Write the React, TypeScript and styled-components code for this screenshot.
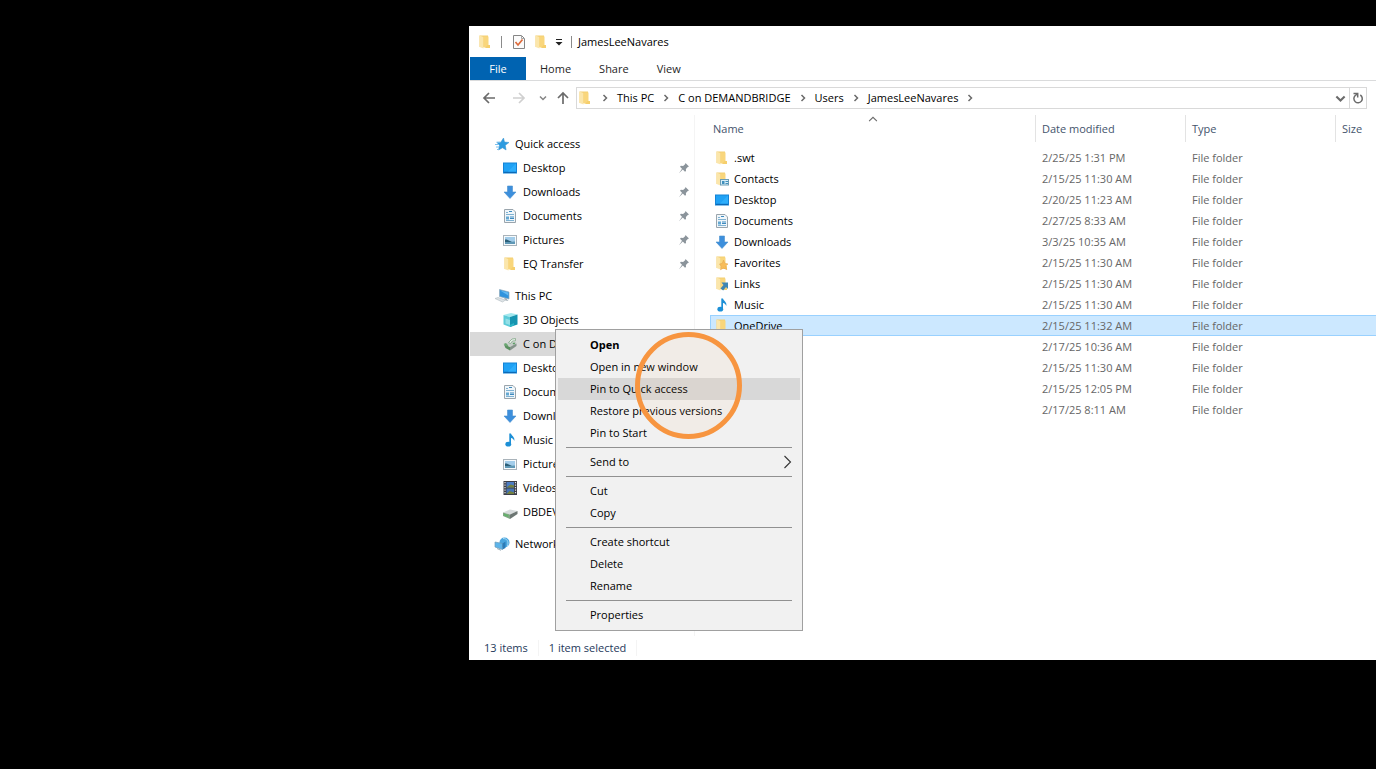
import React from "react";
import styled, { createGlobalStyle, css } from "styled-components";

const GlobalStyle = createGlobalStyle`
  * { box-sizing: border-box; }
  html, body { margin: 0; background: #000; }
  body, button {
    font-family: "Open Sans", "Segoe UI", sans-serif;
    font-size: 11px;
    line-height: 16px;
    color: #000;
  }
  button { margin: 0; padding: 0; border: 0; background: transparent; }
  a { color: inherit; text-decoration: none; }
  svg { display: block; flex: none; }
`;

/* ---------- icons ---------- */

type IconName =
  | "folder" | "desktop" | "download" | "document" | "picture" | "music" | "video"
  | "star" | "pc" | "cube" | "netdrive" | "drive" | "network"
  | "contacts" | "favorites" | "links";

const FolderShape = () => (
  <>
    <path d="M2.500 1.500H11V13H2.500z" fill="#f3cf72" />
    <path d="M2.500 1.500L6.500 3v11.500l-4-1.500z" fill="#fbe6ab" />
    <path d="M6.500 2.500h5v11h-5z" fill="#f9d67c" />
    <path d="M10.500 11H13v3H8z" fill="#f6cf6d" />
  </>
);

const drawings: Record<IconName, React.ReactNode> = {
  folder: <FolderShape />,
  contacts: (
    <>
      <FolderShape />
      <rect x="6.500" y="8.500" width="8" height="5.500" fill="#d6edf7" stroke="#6c9db5" />
      <path d="M8 10h2.500v3H8z" fill="#3f8fbd" />
      <path d="M11.500 10.500h2.500M11.500 12.500h2.500" stroke="#3f8fbd" />
    </>
  ),
  favorites: (
    <>
      <FolderShape />
      <path d="M9.500 5l1.200 3.200 3.300.8-2.500 2.200 1.300 3.500-3.200-1.700-3.100 1.700.8-3.400L5.500 9l2.800-.6z" fill="#f8bd5a" stroke="#e5a850" strokeWidth=".6" />
    </>
  ),
  links: (
    <>
      <FolderShape />
      <path d="M7.500 6.500H14V13l-2-2-2.800 3.500-2.700-2L9.500 9z" fill="#3f86b4" />
    </>
  ),
  desktop: (
    <>
      <rect x="1" y="2.500" width="14" height="11" fill="#1583d6" />
      <path d="M2 3.500h12v8H2z" fill="#20a2f5" />
      <path d="M14 3.500v8H6z" fill="#2eaefb" />
      <path d="M2 12.500h12" stroke="#0d69b5" />
    </>
  ),
  download: <path d="M5.500 2h5v6H14l-6 6.500L2 8h3.500z" fill="#3d8fdc" stroke="#4a90cf" strokeWidth=".6" />,
  document: (
    <>
      <path d="M2.500 1.500h8.500l2.500 2.500v10.500h-11z" fill="#f0f6fa" stroke="#9aa5ad" />
      <path d="M4 4.500h2M4 6.500h8M4 12.500h8" stroke="#7fb2d2" />
      <path d="M7 3.500h3M8 9h4M8 10.500h4" stroke="#3d8abf" />
      <path d="M4 8.500h3v3H4z" fill="#64a8d2" />
    </>
  ),
  picture: (
    <>
      <rect x="1.500" y="3.500" width="13" height="10" fill="#f6fafc" stroke="#a9b3ba" />
      <path d="M3 5h10v7H3z" fill="#a3cdea" />
      <path d="M3 9.500c3-.5 5 .5 10 0V12H3z" fill="#5f98b6" />
      <path d="M3 7.500c2-.5 4 1 7 2.500H3z" fill="#2b5f78" />
    </>
  ),
  music: (
    <>
      <ellipse cx="6.300" cy="12.200" rx="2.900" ry="2.400" fill="#1c8fd6" />
      <path d="M7.300 1.500H9c.3 2.500 4.200 3.200 3.300 7.500-.7-2-1.600-2.700-3.300-3.100v6.500H7.300z" fill="#1c8fd6" />
    </>
  ),
  video: (
    <>
      <path d="M1.500 1h13.500v14H1.500z" fill="#3d3f48" />
      <path d="M4.500 2h7.500v5.500H4.500z" fill="#4c7cc2" />
      <path d="M4.500 8.500h7.500V14H4.500z" fill="#4573b4" />
      <path d="M4.500 7.500l4-3 3.500 1v2zM4.500 14l3-3 4.500 1.500V14z" fill="#74813e" />
      <path d="M3 2v12.500M13.500 2v12.500" stroke="#e4e6ea" strokeWidth="1.200" strokeDasharray="1.300 1.200" />
    </>
  ),
  star: (
    <>
      <path d="M9.500 2l1 4 4.500.5-3.700 2.800.8 4.700-3.600-2.200L4.500 14l1-4.500-2.500-3 3.800-.3z" fill="#2d9be0" stroke="#3590cc" strokeWidth=".5" />
      <path d="M2.500 6.200H6M1 8.500h4M2 11h3M3 13.500h2" stroke="#7cc0ec" />
    </>
  ),
  pc: (
    <>
      <path d="M5.500 1.500l9.500 2.500v7L5.500 8.500z" fill="#2f93dd" stroke="#8fa9ba" strokeWidth=".7" />
      <path d="M6.200 2.500l8 2v3z" fill="#63b9f2" />
      <path d="M10 9.700l2 .6 2.500 2.700-3-.5z" fill="#a5b1b9" />
      <path d="M1 10.500l3-1 7.500 2.500-3 2z" fill="#dde3e6" stroke="#b0bac0" strokeWidth=".6" />
    </>
  ),
  cube: (
    <>
      <path d="M1.500 3L9 1l6.500 1.500-7.500 2.500z" fill="#a2e8ee" />
      <path d="M1.500 3L8 5v10l-6.500-2.500z" fill="#5ccbd8" />
      <path d="M8 5l7.500-2.500v10L8 15z" fill="#1594b0" />
      <path d="M3.500 6.500L8 8v5l-4.500-1.500z" fill="#92dfe7" />
      <path d="M8 13l4-2v2.500L8 15z" fill="#2db4c6" />
    </>
  ),
  netdrive: (
    <>
      <path d="M5 7l5-1.500 4.500 2L8 11z" fill="#c5ccc8" />
      <path d="M2 8.500L8 11v3.500L3.500 12z" fill="#5a8f60" />
      <path d="M8 11l6.500-3.500V10L8 14.500z" fill="#84928a" />
      <path d="M6.500 6.500L10 3l3.500-.5v2.300l-3 .2-2 2.500z" fill="#e9f0ea" stroke="#82a888" strokeWidth=".8" />
      <path d="M1.500 8l2.500-1 2.500 2.500-1.500 1z" fill="#6aa872" />
      <path d="M10.500 7l3-.5-1.500 2.200z" fill="#4f9a58" />
    </>
  ),
  drive: (
    <>
      <path d="M1 8.500l7-3 7.500 1.500L8 10.500z" fill="#d8dcdd" />
      <path d="M1 8.500l7 2v4.500l-7-3z" fill="#7fa582" />
      <path d="M8 10.500L15.500 7v3L8 15z" fill="#6c7673" />
      <path d="M2 10.500l4 1.500" stroke="#5fb569" strokeWidth="1.500" />
    </>
  ),
  network: (
    <>
      <circle cx="10.500" cy="6.500" r="5" fill="#4ba6de" />
      <path d="M9 2.500c4 0 6 3 4.500 7.500" fill="none" stroke="#a8dbf5" />
      <path d="M1 6l7.500 1.500v6L1 11z" fill="#5cb4ea" stroke="#6d9bb8" strokeWidth=".7" />
      <path d="M8.500 7.500l3-2V12l-3 1.500z" fill="#2c7cb8" />
      <path d="M3 12.500l4 1.800" stroke="#9badb8" />
    </>
  ),
};

const Icon = ({ name }: { name: IconName }) => (
  <svg width="16" height="16" viewBox="0 0 16 16" aria-hidden="true">{drawings[name]}</svg>
);

const PinIcon = () => (
  <svg width="12" height="12" viewBox="0 0 12 12" aria-hidden="true">
    <path d="M7.500 1L11 4.500l-1.200.4-1.900 2 .1 2.100-1 .8-2.200-2.200L1 11.200l3-4.400L2 4.700l.9-.9 2.200.2 2-1.800z" fill="#8b949b" />
  </svg>
);

const Chevron = ({ dir, color = "#6b6b6b", size = 8, weight = 1.5 }: { dir: "right" | "down" | "up"; color?: string; size?: number; weight?: number }) => {
  const d = { right: "M2.500 1l3 3-3 3", down: "M1 2.500l3 3 3-3", up: "M0.500 5.500L4 2l3.500 3.500" }[dir];
  return (
    <svg width={size} height={size} viewBox="0 0 8 8" aria-hidden="true">
      <path d={d} fill="none" stroke={color} strokeWidth={weight} />
    </svg>
  );
};

const ArrowIcon = ({ dir, color }: { dir: "left" | "right" | "up"; color: string }) => {
  const d = {
    left: "M13 7H2M7 2L2 7l5 5",
    right: "M1 7h11M7 2l5 5-5 5",
    up: "M7 13V2M2 7l5-5 5 5",
  }[dir];
  return (
    <svg width="14" height="14" viewBox="0 0 14 14" aria-hidden="true">
      <path d={d} fill="none" stroke={color} strokeWidth="1.700" />
    </svg>
  );
};

/* ---------- window frame ---------- */

const Desktop = styled.div`
  min-height: 100vh;
  padding: 26px 0 0 469px;
  background: #000;
`;

const Window = styled.div`
  position: relative;
  padding-left: 1px;
  background: #fff;
`;

const TitleBar = styled.header`
  display: flex;
  align-items: center;
  height: 31px;
  padding-left: 4px;
`;

const ToolButton = styled.button<{ $narrow?: boolean }>`
  display: flex;
  align-items: center;
  justify-content: center;
  width: ${(p) => (p.$narrow ? 14 : 22)}px;
  height: 22px;
`;

const ToolDivider = styled.span`
  width: 1px;
  height: 12px;
  margin: 0 6px 0 5px;
  background: #8a8a8a;
`;

const Title = styled.h1`
  margin: 0;
  font-size: 11px;
  font-weight: 400;
`;

const Tabs = styled.nav`
  display: flex;
  height: 24px;
  border-bottom: 1px solid #dadbdc;
`;

const Tab = styled.button<{ $primary?: boolean }>`
  padding: 0 14px;
  color: #262626;
  ${(p) => p.$primary && css`
    width: 56px;
    background: #0063b1;
    color: #fff;
  `}
`;

const AddressRow = styled.div`
  display: flex;
  align-items: center;
  padding: 6px 9px 6px 4px;
`;

const NavButton = styled.button<{ $width: number }>`
  display: flex;
  align-items: center;
  justify-content: center;
  width: ${(p) => p.$width}px;
  height: 22px;
`;

const AddressBox = styled.div`
  display: flex;
  flex: 1;
  height: 22px;
  margin-left: 2px;
  border: 1px solid #d9d9d9;
`;

const Crumbs = styled.div`
  display: flex;
  flex: 1;
  align-items: center;
  white-space: nowrap;
`;

const CrumbGap = styled.span`
  display: flex;
  justify-content: center;
  width: 24px;
`;

const BoxButton = styled.button<{ $divided?: boolean }>`
  display: flex;
  align-items: center;
  justify-content: center;
  width: 17px;
  border-left: ${(p) => (p.$divided ? "1px solid #d9d9d9" : "0")};
`;

/* ---------- panes ---------- */

const Panes = styled.div`
  display: flex;
`;

const Sidebar = styled.nav`
  display: flex;
  flex: none;
  flex-direction: column;
  gap: 8px;
  width: 225px;
  padding: 17px 0 80px;
  border-right: 1px solid #f4f4f4;
`;

const Tree = styled.ul`
  margin: 0;
  padding: 0;
  list-style: none;
`;

const TreeLink = styled.a<{ $root?: boolean; $active?: boolean }>`
  display: flex;
  align-items: center;
  gap: 5px;
  height: 24px;
  padding: 0 4px 0 ${(p) => (p.$root ? 24 : 32)}px;
  background: ${(p) => (p.$active ? "#d9d9d9" : "transparent")};
  white-space: nowrap;
`;

const TreeLabel = styled.span`
  flex: 1;
`;

const ListPane = styled.main`
  flex: 1;
  min-width: 0;
  padding-left: 15px;
`;

const FileTable = styled.table`
  width: 100%;
  table-layout: fixed;
  border-collapse: separate;
  border-spacing: 0;
  white-space: nowrap;
`;

const Col = styled.col<{ $width?: number }>`
  width: ${(p) => (p.$width ? `${p.$width}px` : "auto")};
`;

const HeadCell = styled.th`
  position: relative;
  height: 32px;
  padding: 0;
  vertical-align: top;
  text-align: left;
  font-weight: 400;
`;

const HeadLabel = styled.div<{ $first?: boolean }>`
  height: 27px;
  padding-left: ${(p) => (p.$first ? 3 : 6)}px;
  border-left: ${(p) => (p.$first ? "0" : "1px solid #e3e3e3")};
  line-height: 27px;
  color: #44546c;
`;

const SortMark = styled.span`
  position: absolute;
  top: 0;
  left: 50%;
  transform: translateX(-50%);
`;

const Row = styled.tr<{ $selected?: boolean }>`
  td {
    height: 21px;
    padding: 0 0 0 7px;
    color: #666;
  }
  td:first-child {
    padding-left: 4px;
    color: #000;
  }
  ${(p) => p.$selected && css`
    td {
      background: #cce8ff;
      box-shadow: inset 0 1px #99d1ff, inset 0 -1px #99d1ff;
    }
    td:first-child {
      box-shadow: inset 1px 1px #99d1ff, inset 0 -1px #99d1ff;
    }
  `}
`;

const NameCell = styled.div`
  display: flex;
  align-items: center;
  gap: 4px;
`;

const StatusBar = styled.footer`
  display: flex;
  align-items: center;
  height: 24px;
  padding-left: 14px;
  color: #1e395b;
`;

const StatusItem = styled.span`
  margin-right: 10px;
  padding-right: 10px;
  border-right: 1px solid #f4f4f4;
`;

/* ---------- context menu ---------- */

const Menu = styled.div`
  position: absolute;
  top: 303px;
  left: 86px;
  width: 248px;
  padding: 4px 2px;
  border: 1px solid #a0a0a0;
  background: #f1f1f1;
`;

const MenuItem = styled.button<{ $bold?: boolean; $hover?: boolean }>`
  display: flex;
  align-items: center;
  justify-content: space-between;
  width: 100%;
  height: 22px;
  padding: 0 8px 0 32px;
  background: ${(p) => (p.$hover ? "#d8d8d8" : "transparent")};
  font-weight: ${(p) => (p.$bold ? 700 : 400)};
`;

const MenuLine = styled.hr`
  height: 1px;
  margin: 3px 8px;
  border: 0;
  background: #919191;
`;

const ClickRing = styled.div`
  position: absolute;
  top: 306px;
  left: 166px;
  width: 107px;
  height: 107px;
  border: 5px solid #f79540;
  border-radius: 50%;
  background: rgba(247, 149, 64, 0.05);
  pointer-events: none;
`;

/* ---------- data ---------- */

type TreeItem = { label: string; icon: IconName; pinned?: boolean; active?: boolean };

const trees: { root: TreeItem; items: TreeItem[] }[] = [
  {
    root: { label: "Quick access", icon: "star" },
    items: [
      { label: "Desktop", icon: "desktop", pinned: true },
      { label: "Downloads", icon: "download", pinned: true },
      { label: "Documents", icon: "document", pinned: true },
      { label: "Pictures", icon: "picture", pinned: true },
      { label: "EQ Transfer", icon: "folder", pinned: true },
    ],
  },
  {
    root: { label: "This PC", icon: "pc" },
    items: [
      { label: "3D Objects", icon: "cube" },
      { label: "C on DEMANDBRIDGE", icon: "netdrive", active: true },
      { label: "Desktop", icon: "desktop" },
      { label: "Documents", icon: "document" },
      { label: "Downloads", icon: "download" },
      { label: "Music", icon: "music" },
      { label: "Pictures", icon: "picture" },
      { label: "Videos", icon: "video" },
      { label: "DBDEV", icon: "drive" },
    ],
  },
  { root: { label: "Network", icon: "network" }, items: [] },
];

const files: { name: string; icon: IconName; date: string; selected?: boolean }[] = [
  { name: ".swt", icon: "folder", date: "2/25/25 1:31 PM" },
  { name: "Contacts", icon: "contacts", date: "2/15/25 11:30 AM" },
  { name: "Desktop", icon: "desktop", date: "2/20/25 11:23 AM" },
  { name: "Documents", icon: "document", date: "2/27/25 8:33 AM" },
  { name: "Downloads", icon: "download", date: "3/3/25 10:35 AM" },
  { name: "Favorites", icon: "favorites", date: "2/15/25 11:30 AM" },
  { name: "Links", icon: "links", date: "2/15/25 11:30 AM" },
  { name: "Music", icon: "music", date: "2/15/25 11:30 AM" },
  { name: "OneDrive", icon: "folder", date: "2/15/25 11:32 AM", selected: true },
  { name: "Pictures", icon: "picture", date: "2/17/25 10:36 AM" },
  { name: "Saved Games", icon: "folder", date: "2/15/25 11:30 AM" },
  { name: "Searches", icon: "folder", date: "2/15/25 12:05 PM" },
  { name: "Videos", icon: "video", date: "2/17/25 8:11 AM" },
];

const menuGroups = [
  ["Open", "Open in new window", "Pin to Quick access", "Restore previous versions", "Pin to Start"],
  ["Send to"],
  ["Cut", "Copy"],
  ["Create shortcut", "Delete", "Rename"],
  ["Properties"],
];

const crumbs = ["This PC", "C on DEMANDBRIDGE", "Users", "JamesLeeNavares"];

const TreeRow = ({ item, root }: { item: TreeItem; root?: boolean }) => (
  <TreeLink href="#" $root={root} $active={item.active}>
    <Icon name={item.icon} />
    <TreeLabel>{item.label}</TreeLabel>
    {item.pinned && <PinIcon />}
  </TreeLink>
);

export default function App() {
  return (
    <>
      <GlobalStyle />
      <Desktop>
        <Window>
          <TitleBar>
            <ToolButton aria-label="Window"><Icon name="folder" /></ToolButton>
            <ToolDivider />
            <ToolButton aria-label="Properties">
              <svg width="14" height="16" viewBox="0 0 14 16" aria-hidden="true">
                <path d="M1.500 1.500h8l3 3v10h-11z" fill="#fbfbfb" stroke="#858585" />
                <path d="M9.500 1.500v3h3" fill="none" stroke="#a5a5a5" />
                <path d="M3.500 8l2.500 3 4.500-5.500" fill="none" stroke="#dd6b3b" strokeWidth="1.700" />
              </svg>
            </ToolButton>
            <ToolButton aria-label="New folder"><Icon name="folder" /></ToolButton>
            <ToolButton $narrow aria-label="Customize toolbar">
              <svg width="8" height="8" viewBox="0 0 8 8" aria-hidden="true">
                <path d="M1 1h6v1H1zM0.500 4h7L4 7.500z" fill="#222" />
              </svg>
            </ToolButton>
            <ToolDivider />
            <Title>JamesLeeNavares</Title>
          </TitleBar>

          <Tabs>
            <Tab $primary>File</Tab>
            <Tab>Home</Tab>
            <Tab>Share</Tab>
            <Tab>View</Tab>
          </Tabs>

          <AddressRow>
            <NavButton $width={30} aria-label="Back"><ArrowIcon dir="left" color="#6b6b6b" /></NavButton>
            <NavButton $width={30} aria-label="Forward"><ArrowIcon dir="right" color="#d0d0d0" /></NavButton>
            <NavButton $width={18} aria-label="Recent locations"><Chevron dir="down" color="#858585" /></NavButton>
            <NavButton $width={22} aria-label="Up"><ArrowIcon dir="up" color="#6b6b6b" /></NavButton>
            <AddressBox>
              <Crumbs>
                <Icon name="folder" />
                {crumbs.map((crumb, i) => (
                  <React.Fragment key={crumb}>
                    <CrumbGap><Chevron dir="right" /></CrumbGap>
                    <a href="#">{crumb}</a>
                    {i === crumbs.length - 1 && <CrumbGap><Chevron dir="right" /></CrumbGap>}
                  </React.Fragment>
                ))}
              </Crumbs>
              <BoxButton aria-label="Previous locations"><Chevron dir="down" size={11} /></BoxButton>
              <BoxButton $divided aria-label="Refresh">
                <svg width="12" height="12" viewBox="0 0 12 12" aria-hidden="true">
                  <path d="M8.300 3A4.200 4.200 0 1 1 3.200 3.500L5.500 1.800" fill="none" stroke="#6b6b6b" strokeWidth="1.500" />
                  <path d="M1.500 1.500h4.200V5.500" fill="none" stroke="#6b6b6b" strokeWidth="1.500" />
                </svg>
              </BoxButton>
            </AddressBox>
          </AddressRow>

          <Panes>
            <Sidebar>
              {trees.map(({ root, items }) => (
                <Tree key={root.label}>
                  <li><TreeRow item={root} root /></li>
                  {items.map((item) => <li key={item.label}><TreeRow item={item} /></li>)}
                </Tree>
              ))}
            </Sidebar>

            <ListPane>
              <FileTable>
                <colgroup>
                  <Col $width={325} />
                  <Col $width={150} />
                  <Col $width={150} />
                  <Col />
                </colgroup>
                <thead>
                  <tr>
                    <HeadCell>
                      <HeadLabel $first>Name</HeadLabel>
                      <SortMark><Chevron dir="up" size={9} weight={1} /></SortMark>
                    </HeadCell>
                    <HeadCell><HeadLabel>Date modified</HeadLabel></HeadCell>
                    <HeadCell><HeadLabel>Type</HeadLabel></HeadCell>
                    <HeadCell><HeadLabel>Size</HeadLabel></HeadCell>
                  </tr>
                </thead>
                <tbody>
                  {files.map((file) => (
                    <Row key={file.name} $selected={file.selected}>
                      <td><NameCell><Icon name={file.icon} />{file.name}</NameCell></td>
                      <td>{file.date}</td>
                      <td>File folder</td>
                      <td />
                    </Row>
                  ))}
                </tbody>
              </FileTable>
            </ListPane>
          </Panes>

          <StatusBar>
            <StatusItem>13 items</StatusItem>
            <StatusItem>1 item selected</StatusItem>
          </StatusBar>

          <Menu role="menu">
            {menuGroups.map((group, i) => (
              <React.Fragment key={group[0]}>
                {i > 0 && <MenuLine />}
                {group.map((label) => (
                  <MenuItem key={label} role="menuitem" $bold={label === "Open"} $hover={label === "Pin to Quick access"}>
                    {label}
                    {label === "Send to" && (
                      <svg width="9" height="14" viewBox="0 0 9 14" aria-hidden="true">
                        <path d="M1.500 1l6 6-6 6" fill="none" stroke="#333" strokeWidth="1.100" />
                      </svg>
                    )}
                  </MenuItem>
                ))}
              </React.Fragment>
            ))}
          </Menu>
          <ClickRing />
        </Window>
      </Desktop>
    </>
  );
}
